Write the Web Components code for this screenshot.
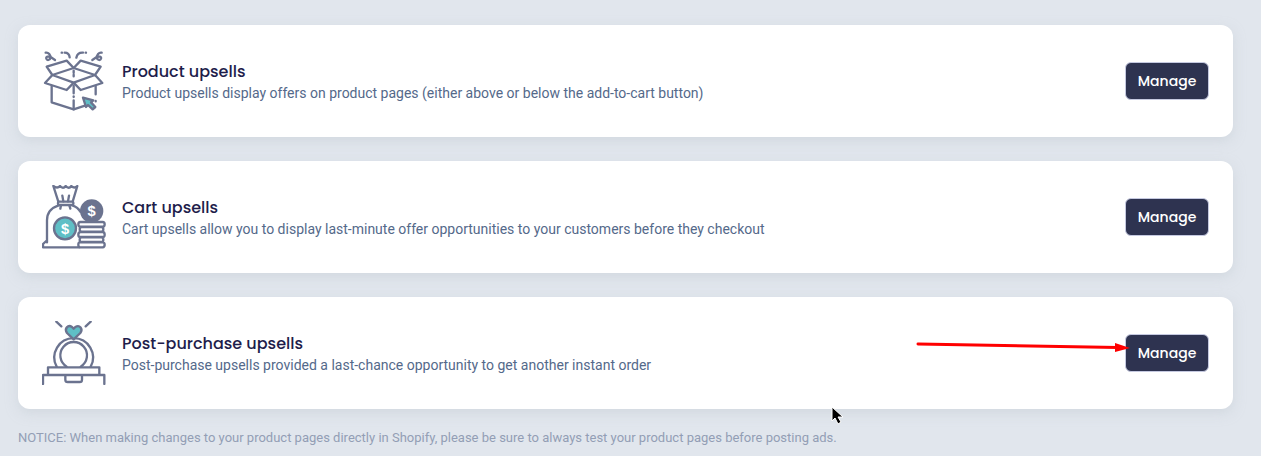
<!DOCTYPE html>
<html lang="en">
<head>
<meta charset="utf-8">
<title>Upsells</title>
<style>
  body { margin: 0; background: #e1e6ed; font-family: Roboto, "Liberation Sans", sans-serif; }
</style>
</head>
<body>
<upsell-page></upsell-page>

<script>
const ICONS = {
  box: `
    <path d="M38 80 98 62 119 84 55 105ZM200 80 140 62 119 84 183 105ZM55 105 33 129 98 150 119 128ZM183 105 205 129 140 150 119 128Z"/>
    <path d="M53 139V187L119 208 162 194M185 139V163M185 183V184"/>
    <path d="M119 92V98M119 104V109M119 137V160M119 169V171M119 181V208"/>
    <path d="M35 38C43 36 51 46 49 54C48 61 39 62 37 56C35 49 43 48 51 52L63 60M203 38C195 36 187 46 189 54C190 61 199 62 201 56C203 49 195 48 187 52L175 60M83 38H84M92 38C102 38 106 43 107 52M155 38H156M147 38C134 37 129 44 127 53"/>
    <path d="M147 173 178 181 171 187 184 201 176 208 162 195 156 201Z" fill="#5fbfc6"/>`,
  bag: `
    <path d="M73 77 58 30C66 36 72 37 78 30C84 37 90 37 95 30C101 37 107 37 112 30C119 37 124 36 130 30L116 77M85 59 88 76M105 59 102 76"/>
    <rect x="72" y="77" width="46" height="10" rx="3"/>
    <path d="M81 88 79 98M106 88 109 98M74 88C49 96 39 111 39 133V193L27 204V214H136M115 88C127 92 134 98 139 107M39 193V199"/>
    <circle cx="93" cy="157" r="33" fill="#5fbfc6"/>
    <circle cx="173" cy="105" r="35" fill="#6b738f" stroke="none"/>
    <path d="M139 138H206Q212 138 212 145T206 152H139Q133 152 133 145T139 138ZM143 153H202Q208 153 208 160T202 167H143Q137 167 137 160T143 153ZM139 168H206Q212 168 212 176T206 183H139Q133 183 133 176T139 168ZM143 184H202Q208 184 208 191T202 198H143Q137 198 137 191T143 184ZM139 199H206Q212 199 212 206T206 214H139Q133 214 133 206T139 199Z" fill="#fff"/>
    <text x="93" y="173" class="coin">$</text><text x="173" y="121" class="coin">$</text>`,
  ring: `
    <path d="M67 29 82 43M170 29 155 43"/>
    <path d="M68 164A58 58 0 1 1 170 164M98 164A40 40 0 1 1 140 164"/>
    <path d="M119 82 99 63C90 50 102 37 114 45L119 50 124 45C137 37 148 51 139 63Z" fill="#5fbfc6"/>
    <path d="M42 187V166H196V187M27 216V189H211V216M94 189V203Q94 210 101 210H137Q144 210 144 203V189"/>`
};

function define(name, markup, setup) {
  const template = document.createElement('template');
  template.innerHTML = markup;
  customElements.define(name, class extends HTMLElement {
    constructor() {
      super();
      this.attachShadow({ mode: 'open' }).append(template.content.cloneNode(true));
    }
    connectedCallback() { if (setup) setup(this, this.shadowRoot); }
  });
}

define('upsell-icon', `
  <style>
    :host { display: block; width: 64px; height: 64px; flex: none; }
    svg { display: block; width: 100%; height: 100%; fill: none; stroke: #6b738f; stroke-width: 7; stroke-linecap: round; stroke-linejoin: round; }
    .coin { font: 700 44px "Liberation Sans", sans-serif; fill: #fff; stroke: none; text-anchor: middle; }
  </style>
  <svg viewBox="24 27 192 192" aria-hidden="true"></svg>`,
  (host, root) => { root.querySelector('svg').innerHTML = ICONS[host.getAttribute('name')] || ''; });

define('manage-button', `
  <style>
    :host { display: block; flex: none; }
    button { display: block; box-sizing: border-box; width: 84px; height: 38px; padding: 0; border: 1px solid #c5c9e0; border-radius: 6px; background: #2e3350; color: #fff; font: 500 14px/20px Poppins, Inter, sans-serif; cursor: pointer; }
  </style>
  <button type="button"><slot></slot></button>`);

define('upsell-card', `
  <style>
    :host { display: flex; position: relative; align-items: center; gap: 16px; padding: 24px; border-radius: 12px; background: #fff; box-shadow: 0 4px 12px #c4ccd480; }
    .copy { flex: 1; min-width: 0; }
    h2 { margin: 0; color: #1e1d4b; font: 500 16px/24px Poppins, Inter, sans-serif; }
    p { margin: 0; color: #54698a; font-size: 14px; line-height: 18px; }
  </style>
  <upsell-icon></upsell-icon>
  <div class="copy"><h2><slot name="title"></slot></h2><p><slot></slot></p></div>
  <manage-button>Manage</manage-button>
  <slot name="overlay"></slot>`,
  (host, root) => {
    const icon = document.createElement('upsell-icon');
    icon.setAttribute('name', host.getAttribute('icon'));
    root.querySelector('upsell-icon').replaceWith(icon);
  });

define('pointer-arrow', `
  <style>
    :host { display: block; position: absolute; right: 103px; top: 42px; pointer-events: none; }
    svg { display: block; }
  </style>
  <svg width="215" height="16" viewBox="0 0 215 16" aria-hidden="true"><path d="M3 5 203 8.5" fill="none" stroke="#f00" stroke-width="3" stroke-linecap="round"/><path d="M200 4 215 9 200 13Z" fill="#f00"/></svg>`);

define('mouse-pointer', `
  <style>
    :host { display: block; position: absolute; right: 389px; bottom: -16px; pointer-events: none; }
    svg { display: block; }
  </style>
  <svg width="13" height="19" viewBox="0 0 13 19" aria-hidden="true"><path d="M1 1V15L4 12 7 18 10 16 7 11H12Z" fill="#000" stroke="#fff"/></svg>`);

define('upsell-page', `
  <style>
    :host { display: block; padding: 25px 28px 4px 18px; }
    main { display: grid; gap: 24px; }
    .notice { margin: 18px 0 0; color: #939eb5; font-size: 13px; line-height: 22px; }
  </style>
  <main>
    <upsell-card icon="box"><span slot="title">Product upsells</span>Product upsells display offers on product pages (either above or below the add-to-cart button)</upsell-card>
    <upsell-card icon="bag"><span slot="title">Cart upsells</span>Cart upsells allow you to display last-minute offer opportunities to your customers before they checkout</upsell-card>
    <upsell-card icon="ring"><span slot="title">Post-purchase upsells</span>Post-purchase upsells provided a last-chance opportunity to get another instant order<pointer-arrow slot="overlay"></pointer-arrow><mouse-pointer slot="overlay"></mouse-pointer></upsell-card>
  </main>
  <p class="notice">NOTICE: When making changes to your product pages directly in Shopify, please be sure to always test your product pages before posting ads.</p>`);
</script>
</body>
</html>
